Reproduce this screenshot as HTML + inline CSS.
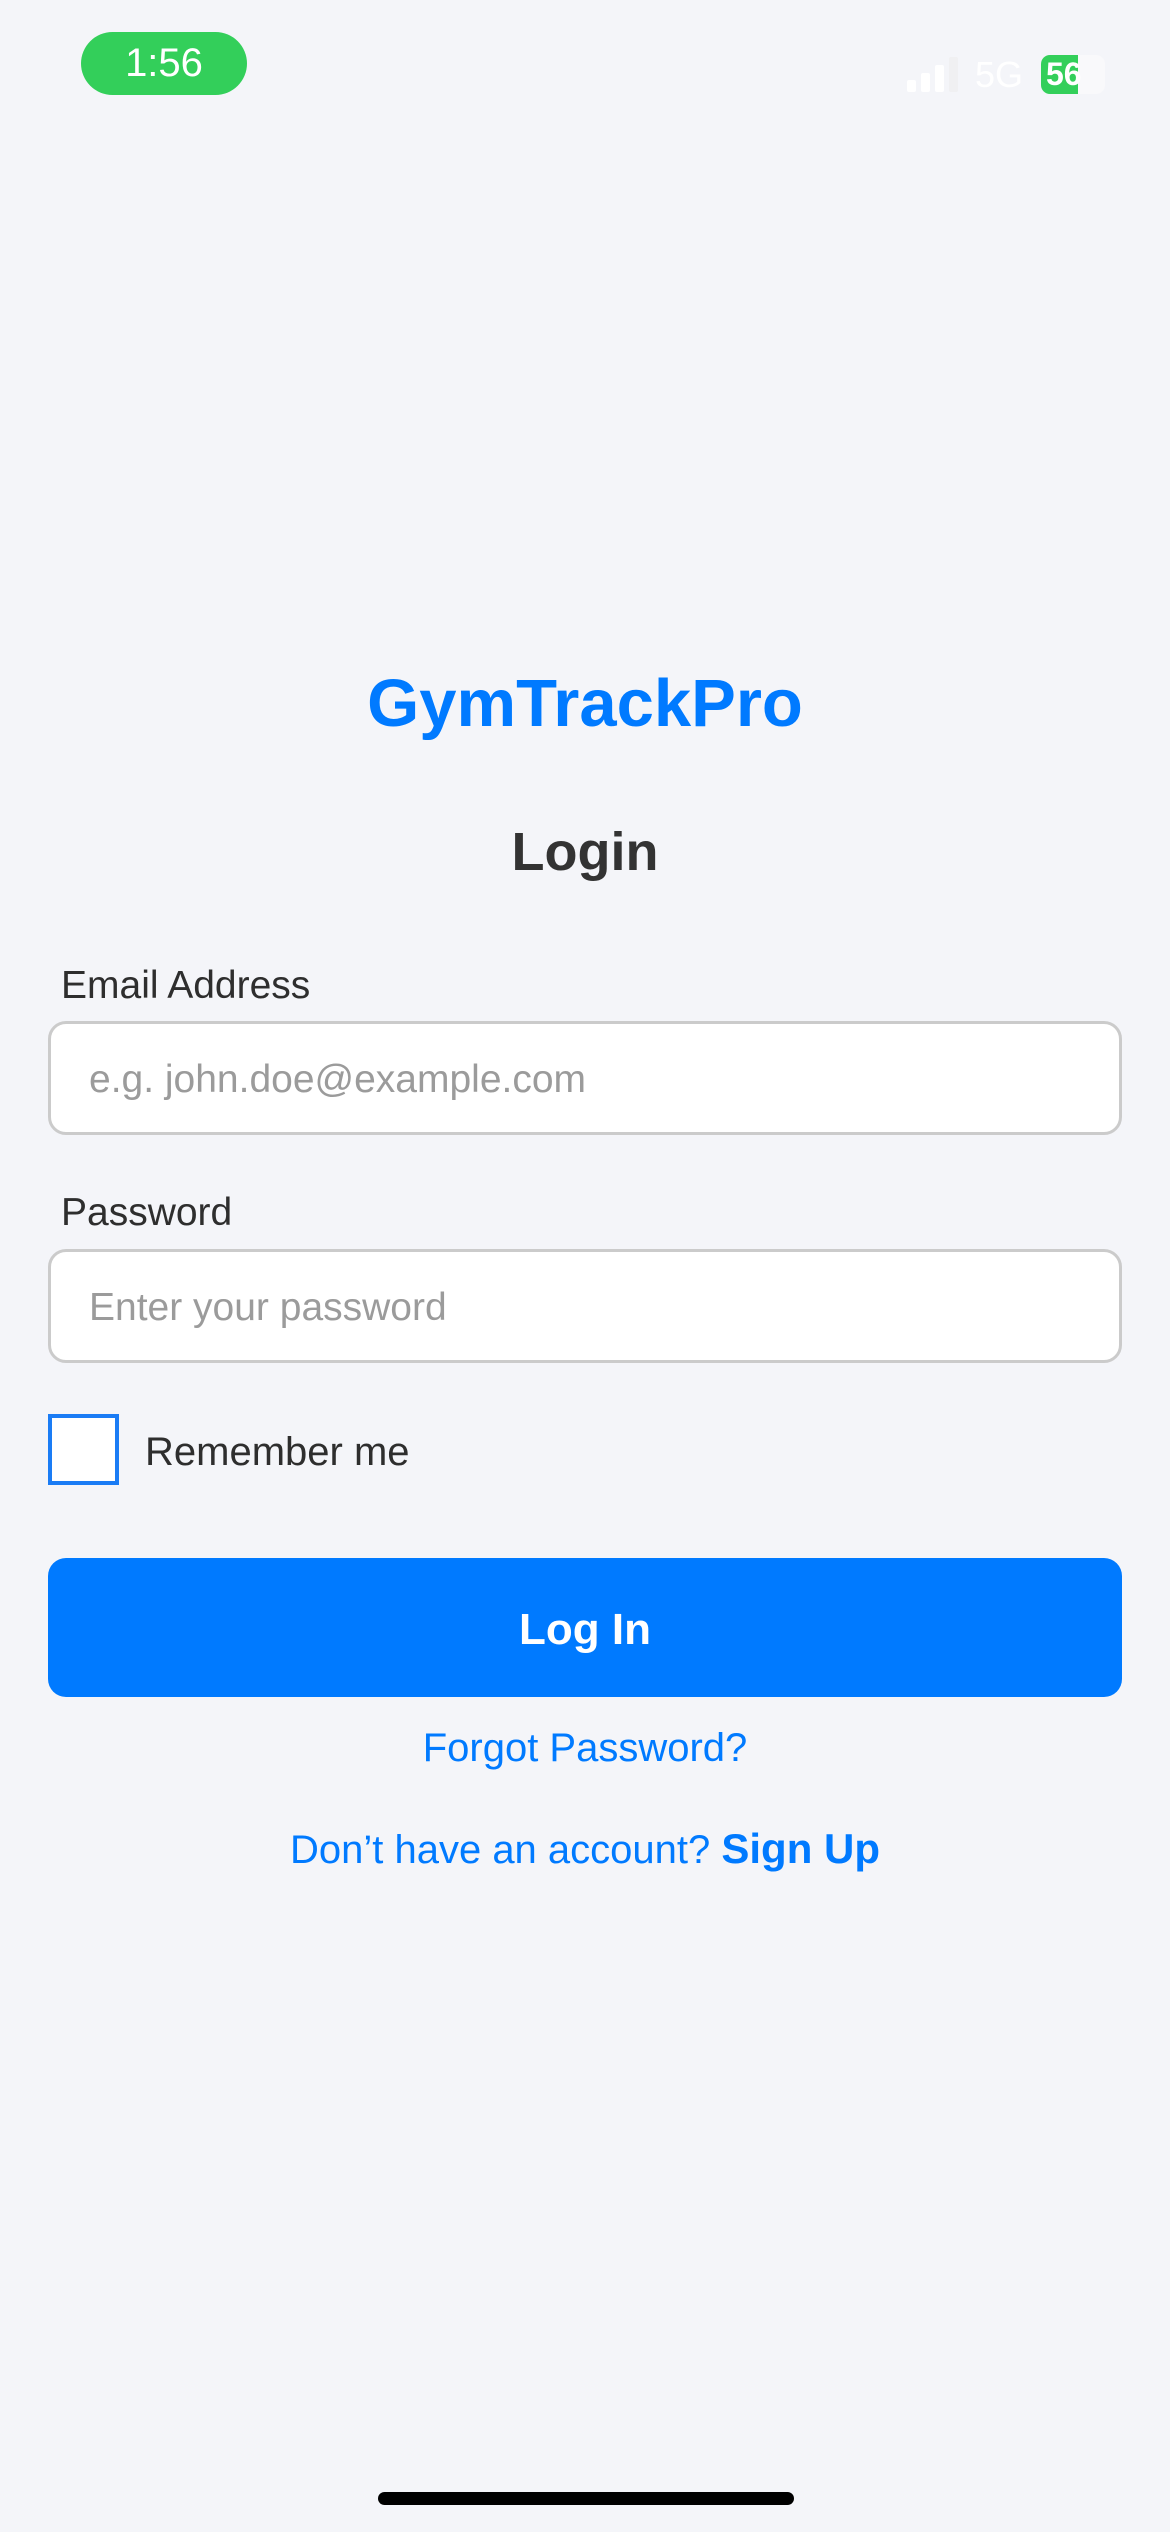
<!DOCTYPE html>
<html><head><meta charset="utf-8"><style>
*{margin:0;padding:0;box-sizing:border-box}
html,body{width:1170px;height:2532px;background:#f4f5f9;font-family:"Liberation Sans",Arial,sans-serif;overflow:hidden}
.a{position:absolute}
.pill{left:81px;top:32px;width:166px;height:63px;border-radius:32px;background:#33cf5a;color:#fff;font-size:40px;text-align:center;line-height:63px}
.t{white-space:nowrap}
.inp{left:48px;width:1074px;height:114px;background:#fff;border:3px solid #cbcbcb;border-radius:18px;font-size:39px;color:#9b9b9b;padding-left:38px;line-height:112px}
.lbl{left:61px;font-size:39px;color:#2e2e2e}
</style></head><body>
<div class="a pill">1:56</div>
<div class="a" style="left:907px;top:80px;width:9px;height:12px;background:#fff;border-radius:2px"></div>
<div class="a" style="left:921px;top:73px;width:9px;height:19px;background:#fff;border-radius:2px"></div>
<div class="a" style="left:935px;top:65px;width:9px;height:27px;background:#fff;border-radius:2px"></div>
<div class="a" style="left:949px;top:57px;width:9px;height:35px;background:#f0f0f2;border-radius:2px"></div>
<div class="a t" style="left:975px;top:54px;font-size:36px;color:#fff">5G</div>
<div class="a" style="left:1041px;top:55px;width:64px;height:39px;border-radius:9px;background:#f9f9fb;overflow:hidden"><div style="width:37px;height:39px;background:#33cf5a"></div></div>
<div class="a t" style="left:1046px;top:55px;font-size:32px;font-weight:bold;color:#fff;line-height:39px">56</div>

<div class="a t" style="left:0;width:1170px;top:664px;text-align:center;font-size:67px;font-weight:bold;color:#007aff;line-height:80px">GymTrackPro</div>
<div class="a t" style="left:0;width:1170px;top:817px;text-align:center;font-size:54px;font-weight:bold;color:#333;line-height:70px">Login</div>

<div class="a lbl t" style="top:964px">Email Address</div>
<div class="a inp" style="top:1021px">e.g. john.doe@example.com</div>
<div class="a lbl t" style="top:1191px">Password</div>
<div class="a inp" style="top:1249px">Enter your password</div>

<div class="a" style="left:48px;top:1414px;width:71px;height:71px;border:4px solid #1a7cf5;background:#fff"></div>
<div class="a t" style="left:145px;top:1430px;font-size:40px;color:#2e2e2e">Remember me</div>

<div class="a" style="left:48px;top:1558px;width:1074px;height:139px;background:#007aff;border-radius:18px;color:#fff;font-size:44px;font-weight:bold;text-align:center;line-height:143px">Log In</div>
<div class="a t" style="left:0;width:1170px;top:1726px;text-align:center;font-size:40px;color:#007aff">Forgot Password?</div>
<div class="a t" style="left:0;width:1170px;top:1825px;text-align:center;font-size:40px;color:#007aff">Don’t have an account? <b style="font-size:42px">Sign Up</b></div>

<div class="a" style="left:378px;top:2492px;width:416px;height:13px;border-radius:7px;background:#000"></div>
</body></html>
